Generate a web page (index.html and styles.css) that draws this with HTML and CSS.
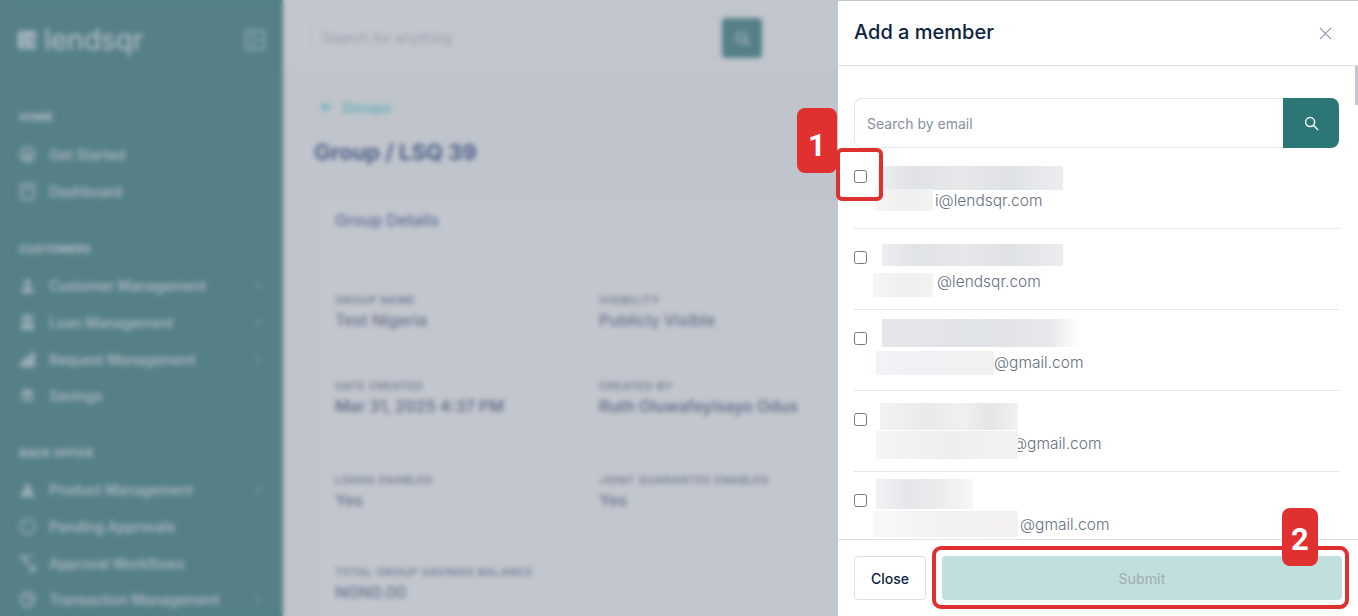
FILE: index.html
```html
<!DOCTYPE html>
<html lang="en">
<head>
<meta charset="utf-8">
<title>Add a member</title>
<link rel="stylesheet" href="styles.css">
</head>
<body>
<div class="app">
  <aside class="sidebar">
    <div class="brand">
      <div class="logo">
        <svg class="logo-mark" viewBox="0 0 20 20"><path d="M2 1h16a1 1 0 0 1 1 1v16a1 1 0 0 1-1 1H2a1 1 0 0 1-1-1V2a1 1 0 0 1 1-1z" fill="#fff" opacity=".8"/><path d="M7 3v13h3M17 6h-4v4h4v5h-4" fill="none" stroke="#2a7775" stroke-width="1.6"/></svg>
        <span class="logo-text">lendsqr</span>
      </div>
      <svg class="toggle" viewBox="0 0 20 20"><rect x="1" y="1" width="18" height="18" rx="3" fill="none" stroke="#fff" stroke-width="1.6"/><path d="M8 1v18M12 8l2 2-2 2" fill="none" stroke="#fff" stroke-width="1.4"/></svg>
    </div>
    <nav class="nav">
      <div class="section first">HOME</div>
      <a class="item"><svg class="ico" viewBox="0 0 16 16"><circle cx="8" cy="8" r="6.5" fill="none" stroke="#fff" stroke-width="1.6"/><path d="M4 9l4-4 4 4v3H4z" fill="#fff" opacity=".7"/></svg><span>Get Started</span></a>
      <a class="item"><svg class="ico" viewBox="0 0 16 16"><rect x="2" y="1" width="12" height="14" rx="2" fill="none" stroke="#fff" stroke-width="1.6"/><path d="M5 5h6M5 8h3" stroke="#fff" stroke-width="1.4"/></svg><span>Dashboard</span></a>
      <div class="section spaced">CUSTOMERS</div>
      <a class="item"><svg class="ico" viewBox="0 0 16 16"><circle cx="8" cy="5" r="3" fill="#fff" opacity=".8"/><path d="M2 15c0-4 3-6 6-6s6 2 6 6z" fill="#fff" opacity=".8"/></svg><span>Customer Management</span><i class="chev"></i></a>
      <a class="item"><svg class="ico" viewBox="0 0 16 16"><rect x="3" y="1" width="10" height="5" fill="#fff" opacity=".8"/><rect x="2" y="8" width="12" height="7" fill="#fff" opacity=".8"/></svg><span>Loan Management</span><i class="chev"></i></a>
      <a class="item"><svg class="ico" viewBox="0 0 16 16"><path d="M1 15v-5h3v-3h4V4h4V1h3v14z" fill="#fff" opacity=".8"/></svg><span>Request Management</span><i class="chev"></i></a>
      <a class="item"><svg class="ico" viewBox="0 0 16 16"><path d="M2 7c0-3 3-5 6-5s6 2 6 5v1H2zM2 10h12v3H2z" fill="#fff" opacity=".8"/></svg><span>Savings</span></a>
      <div class="section spaced">BACK OFFICE</div>
      <a class="item"><svg class="ico" viewBox="0 0 16 16"><path d="M8 1l7 14H1z" fill="#fff" opacity=".8"/></svg><span>Product Management</span><i class="chev"></i></a>
      <a class="item"><svg class="ico" viewBox="0 0 16 16"><circle cx="8" cy="8" r="7" fill="none" stroke="#fff" stroke-width="1.2"/><path d="M5 5l3 3" stroke="#fff"/></svg><span>Pending Approvals</span></a>
      <a class="item"><svg class="ico" viewBox="0 0 16 16"><path d="M1 1h6v6M1 1l14 14M15 9v6H9M9 1h4" fill="none" stroke="#fff" stroke-width="1.4"/></svg><span>Approval Workflows</span></a>
      <a class="item"><svg class="ico" viewBox="0 0 16 16"><circle cx="8" cy="8" r="6.5" fill="none" stroke="#fff" stroke-width="1.6"/><path d="M8 2v6h6" fill="none" stroke="#fff" stroke-width="1.4"/></svg><span>Transaction Management</span><i class="chev"></i></a>
    </nav>
  </aside>
  <main class="main">
    <header class="topbar">
      <div class="top-search">
        <span class="top-input">Search for anything</span>
        <span class="top-btn"><svg class="top-glass" viewBox="0 0 16 16"><circle cx="7" cy="7" r="5" fill="none" stroke="#fff" stroke-width="2"/><path d="M11 11l4 4" stroke="#fff" stroke-width="2"/></svg></span>
      </div>
    </header>
    <div class="content">
      <a class="back"><svg class="back-ico" viewBox="0 0 12 12"><path d="M11 6H2M6 2L2 6l4 4" fill="none" stroke="#39cdcc" stroke-width="1.8"/></svg>Groups</a>
      <h1 class="page-title">Group / LSQ 39</h1>
      <section class="card">
        <h2 class="card-head">Group Details</h2>
        <div class="fields">
          <div class="field"><div class="label">GROUP NAME</div><div class="value">Test Nigeria</div></div>
          <div class="field"><div class="label">VISIBILITY</div><div class="value">Publicly Visible</div></div>
          <div class="field"><div class="label">DATE CREATED</div><div class="value strong">Mar 31, 2025 4:37 PM</div></div>
          <div class="field"><div class="label">CREATED BY</div><div class="value strong">Ruth Oluwafeyisayo Odus</div></div>
          <div class="field"><div class="label">LOANS ENABLED</div><div class="value">Yes</div></div>
          <div class="field"><div class="label">JOINT GUARANTEE ENABLED</div><div class="value">Yes</div></div>
          <div class="field"><div class="label">TOTAL GROUP SAVINGS BALANCE</div><div class="value">NGN0.00</div></div>
        </div>
      </section>
    </div>
  </main>
</div>

<div class="backdrop"></div>

<aside class="drawer">
  <header class="drawer-head">
    <h2 class="drawer-title">Add a member</h2>
    <svg class="close-x" viewBox="0 0 14 14"><path d="M1 1l12 12M13 1L1 13" fill="none" stroke="#8d96a5" stroke-width="1.2"/></svg>
  </header>
  <div class="drawer-body">
    <form class="email-search">
      <input class="email-input" type="text" placeholder="Search by email">
      <button class="email-btn" type="button"><svg class="glass" viewBox="0 0 16 16"><circle cx="6.5" cy="6.5" r="4.8" fill="none" stroke="#fff" stroke-width="1.6"/><path d="M10.2 10.2l4.3 4.3" stroke="#fff" stroke-width="1.6" stroke-linecap="round"/></svg></button>
    </form>
    <ul class="members">
      <li class="member r1"><input class="check" type="checkbox"><div class="person"><div class="name-line"><div class="name-mask"></div></div><div class="mail-line"><div class="mail-mask"></div><span class="mail">i@lendsqr.com</span></div></div></li>
      <li class="member r2"><input class="check" type="checkbox"><div class="person"><div class="name-line"><div class="name-mask"></div></div><div class="mail-line"><div class="mail-mask"></div><span class="mail">@lendsqr.com</span></div></div></li>
      <li class="member r3"><input class="check" type="checkbox"><div class="person"><div class="name-line"><div class="name-mask"></div></div><div class="mail-line"><div class="mail-mask"></div><span class="mail">@gmail.com</span></div></div></li>
      <li class="member r4"><input class="check" type="checkbox"><div class="person"><div class="name-line"><div class="name-mask"></div></div><div class="mail-line"><div class="mail-mask"></div><span class="mail">@gmail.com</span></div></div></li>
      <li class="member r5"><input class="check" type="checkbox"><div class="person"><div class="name-line"><div class="name-mask"></div></div><div class="mail-line"><div class="mail-mask"></div><span class="mail">@gmail.com</span></div></div></li>
    </ul>
    <div class="scroll-thumb"></div>
  </div>
  <footer class="drawer-foot">
    <button class="btn-close" type="button">Close</button>
    <button class="btn-submit" type="button" disabled>Submit</button>
  </footer>
</aside>

<div class="mark mark-box-1"></div>
<div class="mark mark-tag-1">1</div>
<div class="mark mark-box-2"></div>
<div class="mark mark-tag-2">2</div>
</body>
</html>
```
FILE: styles.css
```css
* { box-sizing: border-box; }
html, body { margin: 0; height: 100%; overflow: hidden; }
body { font-family: Inter, "Liberation Sans", sans-serif; background: #fff; color: #213f7d; }
h1, h2, ul { margin: 0; padding: 0; }
ul { list-style: none; }

.app { display: flex; height: 616px; overflow: hidden; }

/* sidebar */
.sidebar { width: 283px; flex: none; background: #2a7775; color: #fff; padding: 0 18px 0 19px; box-shadow: 0 0 4px rgba(0,0,0,.2); }
.brand { display: flex; align-items: center; justify-content: space-between; height: 80px; margin-left: -2px; }
.logo { display: flex; align-items: center; gap: 7px; }
.logo-mark { width: 20px; height: 20px; }
.logo-text { font-size: 28px; line-height: 30px; font-weight: 400; width: 100px; opacity: .9; }
.toggle { width: 20px; height: 20px; opacity: .75; }
.nav { padding-top: 29.5px; }
.section { height: 15px; line-height: 15px; font-size: 11px; font-weight: 600; letter-spacing: .2px; margin-bottom: 10px; opacity: .9; }
.section.first { margin-bottom: 12px; }
.spaced { margin-top: 31.5px; }
.item { display: flex; align-items: center; height: 36.9px; font-size: 14px; font-weight: 500; opacity: .8; }
.ico { width: 17px; height: 17px; margin-right: 13px; flex: none; }
.chev { width: 5px; height: 5px; border-top: 1.2px solid #fff; border-right: 1.2px solid #fff; transform: rotate(45deg); margin-left: auto; margin-right: 6px; opacity: .6; }

/* main */
.main { flex: 1; min-width: 0; background: #fff; }
.topbar { height: 70px; background: #fff; padding: 18px 0 0 27px; border-bottom: 1px solid #f2f3f5; box-shadow: 0 3px 10px rgba(0,0,0,.03); }
.top-search { display: flex; width: 452px; height: 40px; }
.top-input { flex: 1; border: 1px solid #eceef1; border-radius: 8px 0 0 8px; padding: 0 11px; line-height: 38px; font-size: 14px; color: #aeb3c0; }
.top-btn { width: 40px; background: #2a7775; border-radius: 4px; display: flex; align-items: center; justify-content: center; }
.top-glass { width: 15px; height: 15px; opacity: .8; }
.content { padding: 28px 0 0 31px; background: #fbfbfb; height: 546px; }
.back { display: flex; align-items: center; gap: 10px; font-size: 14px; color: #39cdcc; height: 18px; margin-left: 6px; font-weight: 500; }
.back-ico { width: 12px; height: 12px; }
.page-title { font-size: 22px; font-weight: 700; line-height: 30px; margin-top: 21px; color: #213f7d; }
.card { margin: 30px 0 0 3px; background: #fff; border: 1px solid #eef0f3; border-radius: 4px; height: 450px; }
.card-head { height: 46px; line-height: 45px; font-size: 16px; font-weight: 500; padding-left: 17px; border-bottom: 1px solid #eef0f3; color: #3e5791; }
.fields { display: grid; grid-template-columns: 264px 264px; grid-template-rows: 86px 94px 92px 60px; padding: 49px 0 0 17px; }
.label { font-size: 11px; line-height: 14px; font-weight: 500; color: #545f7d; letter-spacing: .55px; }
.value { font-size: 16px; line-height: 24px; margin-top: 1px; font-weight: 500; color: #545f7d; }
.strong { font-weight: 600; }

.backdrop { position: fixed; inset: 0; background: rgba(130,138,155,.49); backdrop-filter: blur(2.4px); }

/* drawer */
.drawer { position: fixed; top: 1px; right: 0; bottom: 0; width: 520px; background: #fff; display: flex; flex-direction: column; }
.drawer-head { height: 65px; flex: none; display: flex; align-items: center; justify-content: space-between; padding: 0 26px 2px 16px; border-bottom: 1px solid #dee2e6; }
.drawer-title { font-size: 20px; font-weight: 500; color: #0c2340; line-height: 28px; }
.close-x { width: 13px; height: 13px; margin-top: 2px; }
.drawer-body { flex: 1; min-height: 0; overflow: hidden; padding: 32px 19px 0 16px; position: relative; }
.scroll-thumb { position: absolute; top: 0; right: 0; width: 3px; height: 39px; background: #c4c7cc; }
.email-search { display: flex; height: 50px; }
.email-input { flex: 1; min-width: 0; border: 1px solid #e5e7eb; border-right: 0; border-radius: 8px 0 0 8px; padding: 0 12px; font: 400 14px Inter, "Liberation Sans", sans-serif; outline: 0; }
.email-input::placeholder { color: #868e9e; opacity: 1; }
.email-btn { width: 56px; border: 0; padding: 0; background: #2a7775; border-radius: 0 8px 8px 0; display: flex; align-items: center; justify-content: center; }
.glass { width: 15px; height: 15px; }

.member { display: flex; height: 81px; border-bottom: 1px solid #e3e5e8; }
.check { width: 13px; height: 13px; margin: 22px 6px 0 0; flex: none; accent-color: #2a7775; }
.person { flex: 1; min-width: 0; }
.name-line { height: 39px; display: flow-root; }
.mail-line { display: flex; height: 28px; margin-top: 0; font-size: 15.5px; font-weight: 300; line-height: 28px; color: #667080; }
.name-mask { background: linear-gradient(90deg, #eceef0, #e0e3e6 20%, #e6e8ea 45%, #dfe2e5 70%, #ebedef 100%); }
.mail-mask { flex: none; position: relative; background: linear-gradient(90deg, #f6f6f7, #efeff0 50%, #f3f3f4); }

.r1 .name-mask { margin: 18px 0 0 5px; width: 185px; height: 24px; }
.r1 .mail-mask { margin: 2px 2px 0 2px; width: 58px; height: 22px; }
.r2 .name-mask { margin: 15px 0 0 9px; width: 181px; height: 22px; }
.r2 .mail-mask { margin: 5px 4px 0 0; width: 60px; height: 24px; }
.r3 .name-mask { margin: 9px 0 0 9px; width: 197px; height: 28px; background: linear-gradient(90deg, #e4e6ea, #e0e3e7 50%, #e6e8ea 85%, #fff 100%); }
.r3 .mail-mask { margin: 2px 0 0 3px; width: 118px; height: 24px; background: linear-gradient(90deg, #f0f3f7, #eff1f4 40%, #f1f1f1); }
.r4 .name-mask { margin: 12px 0 0 7px; width: 138px; height: 27px; background: linear-gradient(90deg, #f2f2f3, #e9eaec 35%, #f0f0f1 60%, #e4e5e7 80%, #f1f1f2); }
.r4 .mail-mask { margin: 1px -6px 0 3px; width: 142px; height: 28px; background: linear-gradient(90deg, #f4f4f5, #eeeeef 50%, #f2f2f3); }
.r5 .name-mask { margin: 7px 0 0 3px; width: 97px; height: 30px; background: linear-gradient(90deg, #f1f2f3, #e4e6ea 35%, #ebeced 65%, #f7f7f8); }
.r5 .mail-mask { margin: 0 2px 0 0; width: 145px; height: 26px; background: linear-gradient(90deg, #f8f8f8, #f0f0f1 60%, #f3f1ef); }

.drawer-foot { flex: none; height: 77px; border-top: 1px solid #dee2e6; display: flex; gap: 16px; padding: 16px; background: #fff; position: relative; }
.btn-close { width: 72px; height: 44px; background: #fff; border: 1px solid #dfe1e5; border-radius: 4px; font: 500 14px Inter, "Liberation Sans", sans-serif; color: #0c2340; padding: 0; }
.btn-submit { flex: 1; height: 44px; background: #c1dfdd; border: 0; border-radius: 4px; font: 500 14px Inter, "Liberation Sans", sans-serif; color: #a6b2b4; padding: 0; }

/* annotations */
.mark { position: fixed; }
.mark-box-1 { left: 836px; top: 148px; width: 47px; height: 53px; border: 4px solid #df3030; border-radius: 6px; }
.mark-box-2 { left: 932px; top: 546px; width: 417px; height: 63px; border: 4px solid #df3030; border-radius: 9px; }
.mark-tag-1, .mark-tag-2 { background: #e03030; border-radius: 8px; color: #fff; font: 700 31px Roboto, "Liberation Sans", sans-serif; display: flex; align-items: center; justify-content: center; }
.mark-tag-1 { left: 797px; top: 108px; width: 40px; height: 65px; padding-top: 9px; }
.mark-tag-2 { left: 1282px; top: 508px; width: 36px; height: 58px; padding-top: 4px; }
```
